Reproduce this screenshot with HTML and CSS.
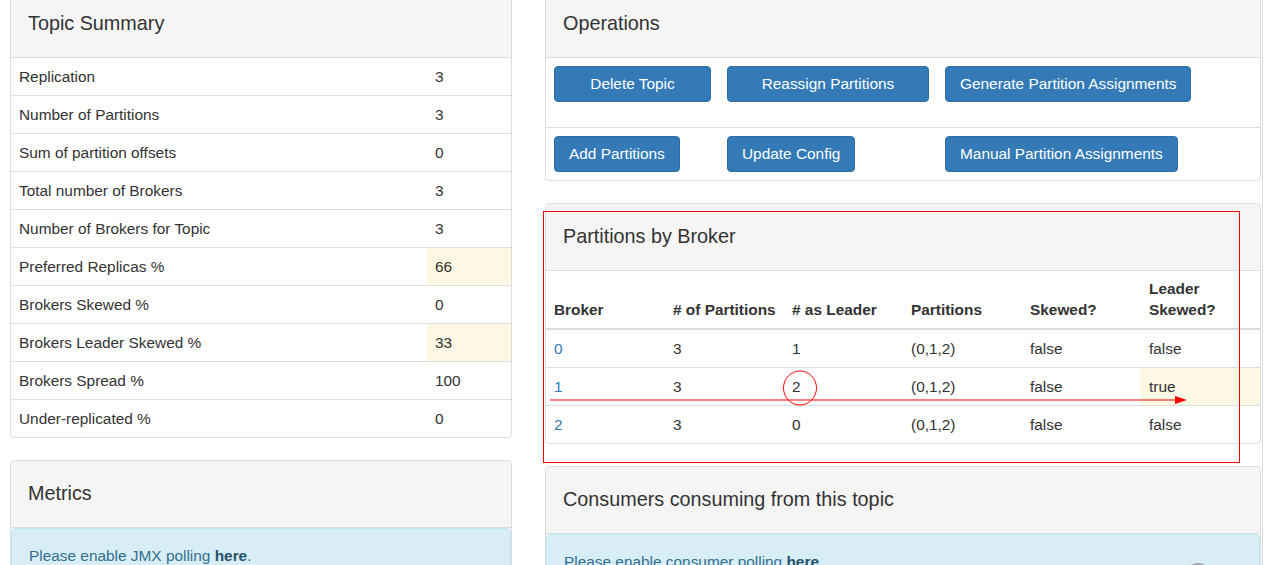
FILE: index.html
```html
<!DOCTYPE html>
<html>
<head>
  <title>Topic</title>
  <link rel="stylesheet" href="styles.css">
</head>
<body>
  <div class="page">
    <div class="col-left">
      <div class="panel">
        <div class="panel-heading">Topic Summary</div>
        <table class="summary">
          <tr><td>Replication</td><td class="val">3</td></tr>
          <tr><td>Number of Partitions</td><td class="val">3</td></tr>
          <tr><td>Sum of partition offsets</td><td class="val">0</td></tr>
          <tr><td>Total number of Brokers</td><td class="val">3</td></tr>
          <tr><td>Number of Brokers for Topic</td><td class="val">3</td></tr>
          <tr><td>Preferred Replicas %</td><td class="val warning">66</td></tr>
          <tr><td>Brokers Skewed %</td><td class="val">0</td></tr>
          <tr><td>Brokers Leader Skewed %</td><td class="val warning">33</td></tr>
          <tr><td>Brokers Spread %</td><td class="val">100</td></tr>
          <tr><td>Under-replicated %</td><td class="val">0</td></tr>
        </table>
      </div>

      <div class="panel">
        <div class="panel-heading">Metrics</div>
        <div class="alert-info">Please enable JMX polling <a href="#">here</a>.</div>
      </div>
    </div>

    <div class="col-right">
      <div class="panel">
        <div class="panel-heading">Operations</div>
        <table class="ops">
          <tr class="first">
            <td class="c1"><button class="btn w-delete">Delete Topic</button></td>
            <td class="c2"><button class="btn w-reassign">Reassign Partitions</button></td>
            <td><button class="btn">Generate Partition Assignments</button></td>
          </tr>
          <tr>
            <td class="c1"><button class="btn">Add Partitions</button></td>
            <td class="c2"><button class="btn">Update Config</button></td>
            <td><button class="btn">Manual Partition Assignments</button></td>
          </tr>
        </table>
      </div>

      <div class="panel">
        <div class="panel-heading">Partitions by Broker</div>
        <table class="brokers">
          <thead>
            <tr>
              <th>Broker</th>
              <th># of Partitions</th>
              <th># as Leader</th>
              <th>Partitions</th>
              <th>Skewed?</th>
              <th>Leader<br>Skewed?</th>
            </tr>
          </thead>
          <tbody>
            <tr><td><a href="#">0</a></td><td>3</td><td>1</td><td>(0,1,2)</td><td>false</td><td>false</td></tr>
            <tr><td><a href="#">1</a></td><td>3</td><td>2</td><td>(0,1,2)</td><td>false</td><td class="warning">true</td></tr>
            <tr><td><a href="#">2</a></td><td>3</td><td>0</td><td>(0,1,2)</td><td>false</td><td>false</td></tr>
          </tbody>
        </table>
      </div>

      <div class="panel">
        <div class="panel-heading">Consumers consuming from this topic</div>
        <div class="alert-info consumers">
          Please enable consumer polling <a href="#">here</a>.
          <span class="spinner"></span>
        </div>
      </div>
    </div>
  </div>

  <svg class="marks" width="1275" height="565" viewBox="0 0 1275 565">
    <rect x="543.5" y="211.5" width="696" height="251" fill="none" stroke="#f00" stroke-width="1"/>
    <ellipse cx="800" cy="388" rx="16.5" ry="17" fill="none" stroke="#f00" stroke-width="1"/>
    <line x1="550" y1="400" x2="1176" y2="400" stroke="#f00" stroke-width="1.2"/>
    <polygon points="1175,396 1187,400 1175,404" fill="#f00"/>
  </svg>
</body>
</html>
```

FILE: styles.css
```css
body {
    font-family: "Liberation Sans", Arial, sans-serif;
    font-size: 15.4px;
    color: #333;
    background-color: #fff;
    margin: 0;
    padding: 0;
    overflow: hidden;
  }

  a {
    color: #337ab7;
    text-decoration: none;
  }

  .page {
    display: flex;
    gap: 33px;
    width: 1252px;
    min-height: 600px;
    margin-top: -10px;
    padding-left: 10px;
    border-right: 1px solid #ddd;
  }

  .col-left {
    width: 502px;
  }

  .col-right {
    width: 716px;
  }

  .panel {
    border: 1px solid #ddd;
    border-radius: 4px;
    background-color: #fff;
    margin-bottom: 22px;
    overflow: hidden;
  }

  .panel-heading {
    height: 64px;
    display: flex;
    align-items: center;
    padding: 0 17px 2px;
    background-color: #f5f5f5;
    border-bottom: 1px solid #ddd;
    font-size: 19.8px;
  }

  table {
    width: 100%;
    border-collapse: collapse;
  }

  .summary td {
    padding: 8px;
    line-height: 21px;
    border-top: 1px solid #ddd;
  }

  .summary tr:first-child td {
    border-top: none;
  }

  .summary .val {
    width: 68px;
  }

  .warning {
    background-color: #fcf8e3;
  }

  .alert-info {
    position: relative;
    padding: 16px 17px 30px;
    line-height: 22px;
    color: #31708f;
    background-color: #d9edf7;
    border: 1px solid #bce8f1;
    border-radius: 4px;
  }

  .alert-info a {
    color: #245269;
    font-weight: bold;
  }

  .spinner {
    position: absolute;
    right: 48px;
    top: 28px;
    width: 26px;
    height: 26px;
    border-radius: 50%;
    background-color: #a3a8ab;
  }

  .ops td {
    padding: 8px;
    border-top: 1px solid #ddd;
    vertical-align: top;
  }

  .ops .first td {
    border-top: none;
    padding-bottom: 25px;
  }

  .ops .c1 {
    width: 157px;
  }

  .ops .c2 {
    width: 202px;
  }

  .btn {
    height: 36px;
    padding: 0 14px;
    font-family: inherit;
    font-size: 15.4px;
    line-height: 34px;
    color: #fff;
    background-color: #337ab7;
    border: 1px solid #2e6da4;
    border-radius: 4px;
    white-space: nowrap;
    cursor: pointer;
  }

  .w-delete {
    width: 157px;
  }

  .w-reassign {
    width: 202px;
  }

  .brokers {
    table-layout: fixed;
  }

  .brokers th {
    padding: 7px 8px 8px;
    line-height: 21px;
    text-align: left;
    vertical-align: bottom;
    white-space: nowrap;
    border-bottom: 2px solid #ddd;
  }

  .brokers td {
    padding: 8px;
    line-height: 21px;
    border-top: 1px solid #ddd;
  }

  .brokers tbody tr:first-child td {
    border-top: none;
  }

  .marks {
    position: absolute;
    left: 0;
    top: 0;
    pointer-events: none;
  }
```
